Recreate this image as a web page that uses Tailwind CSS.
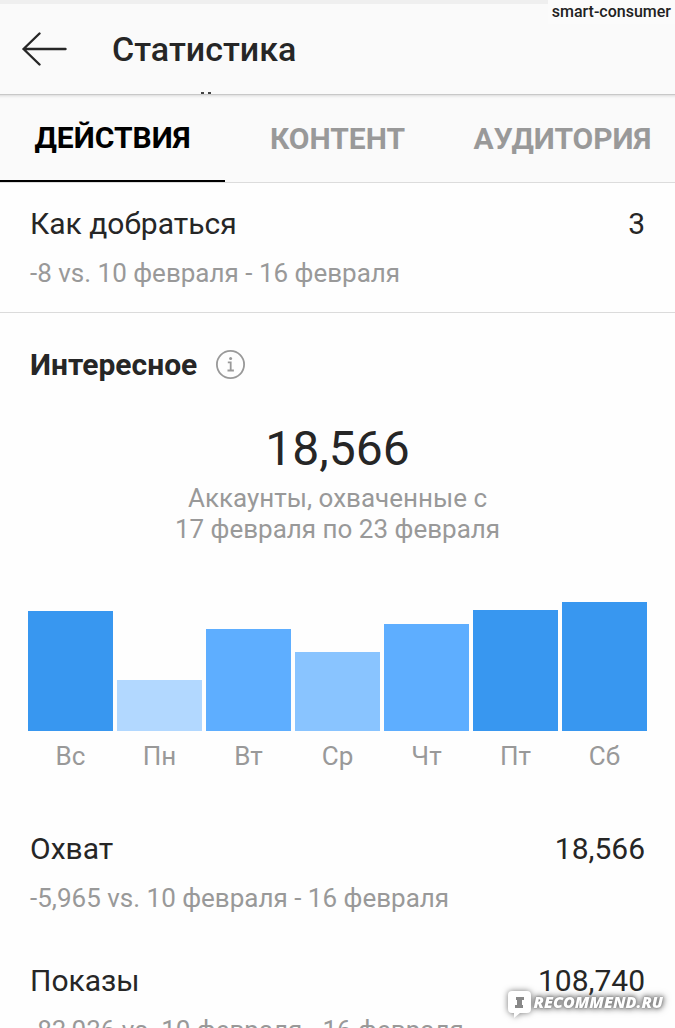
<!DOCTYPE html>
<html lang="ru">
<head>
    <meta charset="UTF-8">
    <meta name="viewport" content="width=device-width, initial-scale=1.0">
    <title>Статистика</title>
    <script src="https://cdn.jsdelivr.net/npm/@tailwindcss/browser@4"></script>
</head>
<body class="bg-[#fefefe] text-[#262626] font-[Roboto,sans-serif]">
    <div class="relative h-screen overflow-hidden">
        <header class="relative border-t-4 border-[#efefef] bg-[#fafafa] h-[94px] px-[22px] flex items-center gap-[45px]">
            <button type="button" aria-label="Назад">
                <svg class="w-[45px] h-[34px]" viewBox="0 0 45 34" fill="none" stroke="#262626" stroke-width="2.4" stroke-linecap="round" stroke-linejoin="round">
                    <path d="M17.500 1.500 1.500 17 17.500 32.500M1.500 17H43.500"/>
                </svg>
            </button>
            <h1 class="text-[34px] leading-[38px] font-medium">Статистика</h1>
            <!-- край прокрученной строки под шапкой -->
            <span class="absolute bottom-0 left-[201px] w-[10px] h-[2px] flex justify-between">
                <i class="w-[3px] bg-[#444]"></i>
                <i class="w-[3px] bg-[#444]"></i>
            </span>
            <span class="absolute top-[-4px] right-0 bg-[#fbfbfb] px-1 text-base leading-6 font-medium text-[#222]">smart-consumer</span>
        </header>

        <nav class="grid grid-cols-3 h-[89px] bg-[#fafafa] border-t border-[#c8c8c8] border-b border-b-[#dcdcdc] shadow-[inset_0_4px_3px_-3px_#d8d8d8] text-[30px] leading-9 font-bold text-[#999]">
            <button type="button" class="border-b-2 border-black text-black">ДЕЙСТВИЯ</button>
            <button type="button">КОНТЕНТ</button>
            <button type="button">АУДИТОРИЯ</button>
        </nav>

        <main>
            <section class="px-[30px] py-[23px] border-b border-[#dbdbdb]">
                <div class="flex justify-between text-[30px] leading-9">
                    <h2>Как добраться</h2>
                    <span>3</span>
                </div>
                <p class="mt-4 text-[26px] leading-[31px] text-[#999]">-8 vs. 10 февраля - 16 февраля</p>
            </section>

            <section class="pt-[34px]">
                <div class="px-[30px] flex items-center gap-[18px]">
                    <h2 class="text-[30px] leading-9 font-bold">Интересное</h2>
                    <button type="button" aria-label="Информация">
                        <svg class="w-[31px] h-[31px]" viewBox="0 0 31 31" fill="none" stroke="#999" stroke-width="1.800">
                            <circle cx="15.500" cy="14.500" r="13.600"/>
                            <path d="M12.800 12.300h2.900v8M12.500 20.500h6.400"/>
                            <circle cx="15.600" cy="8.400" r="1.500" fill="#999" stroke="none"/>
                        </svg>
                    </button>
                </div>

                <div class="mt-[37px] text-center">
                    <p class="text-5xl leading-[58px]">18,566</p>
                    <p class="mt-[5px] text-[26px] leading-[31px] text-[#999]">Аккаунты, охваченные с<br>17 февраля по 23 февраля</p>
                </div>

                <div class="mt-[57px] px-7 grid grid-cols-7 gap-1 items-end text-center">
                    <div class="h-[120px] bg-[#3897f0]"></div>
                    <div class="h-[51px] bg-[#b2d8ff]"></div>
                    <div class="h-[102px] bg-[#5eaeff]"></div>
                    <div class="h-[79px] bg-[#89c4ff]"></div>
                    <div class="h-[107px] bg-[#5eaeff]"></div>
                    <div class="h-[121px] bg-[#3897f0]"></div>
                    <div class="h-[129px] bg-[#3897f0]"></div>
                </div>
                <div class="mt-[10px] px-7 grid grid-cols-7 gap-1 text-center text-[26px] leading-[31px] text-[#999]">
                    <span>Вс</span>
                    <span>Пн</span>
                    <span>Вт</span>
                    <span>Ср</span>
                    <span>Чт</span>
                    <span>Пт</span>
                    <span>Сб</span>
                </div>
            </section>

            <section class="mt-[59px] px-[30px] grid gap-[49px]">
                <div>
                    <div class="flex justify-between text-[30px] leading-9">
                        <h2>Охват</h2>
                        <span>18,566</span>
                    </div>
                    <p class="mt-4 text-[26px] leading-[31px] text-[#999]">-5,965 vs. 10 февраля - 16 февраля</p>
                </div>
                <div>
                    <div class="flex justify-between text-[30px] leading-9">
                        <h2>Показы</h2>
                        <span>108,740</span>
                    </div>
                    <p class="mt-4 text-[26px] leading-[31px] text-[#999]">-83,036 vs. 10 февраля - 16 февраля</p>
                </div>
            </section>
        </main>

        <a href="#" class="absolute right-3 bottom-[10px] flex items-center gap-[3px] text-white drop-shadow-[0_0_3px_#777]">
            <svg class="w-[23px] h-[27px]" viewBox="0 0 23 27">
                <path fill="#fff" d="M4 0h15a4 4 0 0 1 4 4v14a4 4 0 0 1-4 4h-7l-6 5v-5H4a4 4 0 0 1-4-4V4a4 4 0 0 1 4-4z"/>
                <path fill="#888" d="M8 6h8v3h-2v5h1v3H7v-3h2V9H8z"/>
            </svg>
            <span class="pb-1 font-['Open_Sans',sans-serif] text-base leading-6 font-extrabold italic [text-shadow:0_0_2px_#777,0_0_4px_#999]">RECOMMEND.RU</span>
        </a>
    </div>
</body>
</html>
